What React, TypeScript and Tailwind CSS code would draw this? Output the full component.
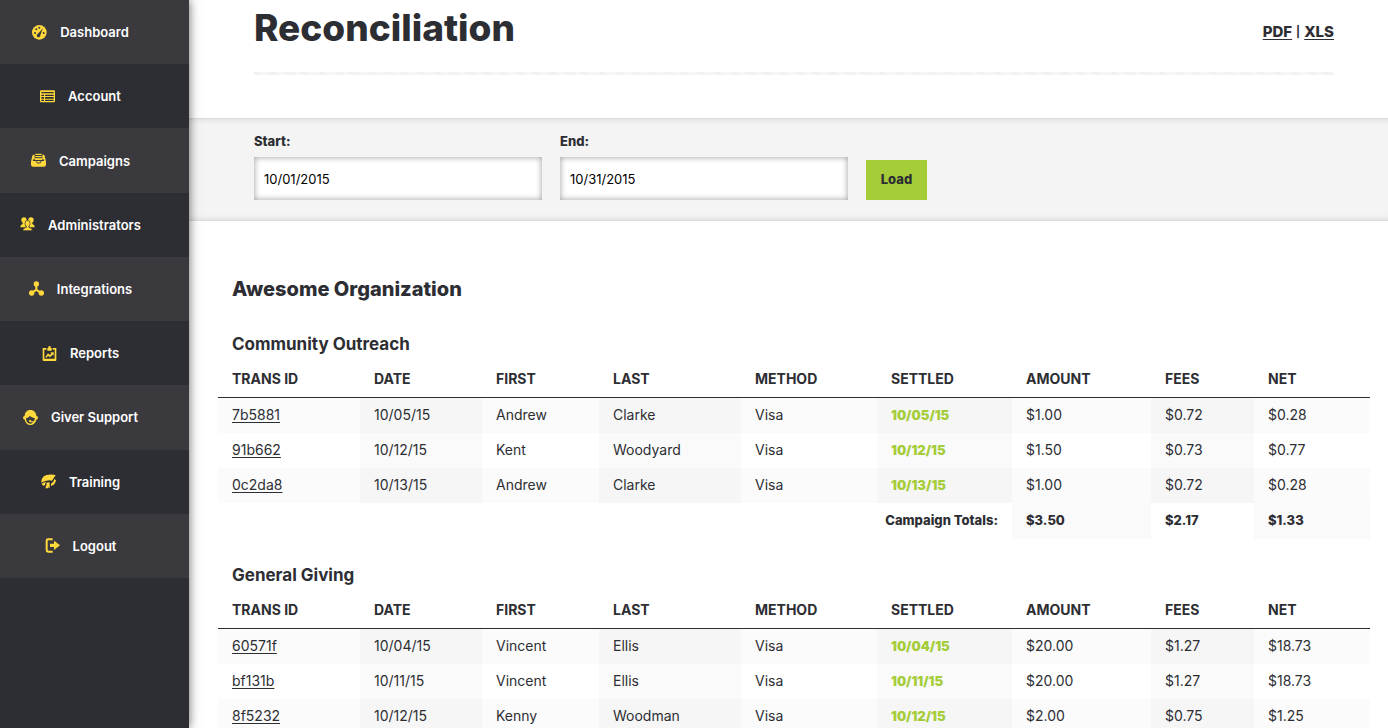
import type { ReactNode } from "react";

type Row = {
  id: string;
  date: string;
  first: string;
  last: string;
  method: string;
  settled: string;
  amount: string;
  fees: string;
  net: string;
};

type Campaign = {
  name: string;
  rows: Row[];
  totals?: { amount: string; fees: string; net: string };
};

// the negative margin cancels the icon's width, so the label alone is centred
const Icon = ({ children }: { children: ReactNode }) => (
  <svg viewBox="0 0 45 45" className="-ml-7 mr-[13px] size-[15px] shrink-0 fill-[#ffd83b] stroke-none" aria-hidden="true">
    {children}
  </svg>
);

const DashboardIcon = () => (
  <Icon>
    <circle cx="22" cy="22" r="22" />
    <g className="fill-[#3a393e]">
      <circle cx="9" cy="24" r="3" />
      <circle cx="35" cy="24" r="3" />
      <circle cx="13" cy="13" r="3" />
      <circle cx="22" cy="8" r="3" />
      <path d="M33 10 25 30a5.5 5.5 0 1 1-7-4Z" />
    </g>
  </Icon>
);

const AccountIcon = () => (
  <Icon>
    <path
      fillRule="evenodd"
      d="M3 4h39q3 0 3 3v30q0 3-3 3H3q-3 0-3-3V7q0-3 3-3ZM4 9v4h37V9ZM4 17v4h8v-4ZM15 17v4h26v-4ZM4 24v5h8v-5ZM15 24v5h26v-5ZM4 32v4h8v-4ZM15 32v4h26v-4Z"
    />
  </Icon>
);

const CampaignsIcon = () => (
  <Icon>
    <path d="M8 5h3v13H8L5 24h9q2 8 9 8t9-8h8l-3-6h-3V5h3q3 0 4 4l4 17v9q0 6-6 6H6q-6 0-6-6v-9L4 9q1-4 4-4Z" />
    <path d="M13 2h19v4H13ZM13 9h19v4H13ZM11 16h23v5H11Z" />
    <path d="M16 24h13q-1 5-6 5t-7-5Z" />
  </Icon>
);

const AdministratorsIcon = () => (
  <Icon>
    <circle cx="12" cy="9" r="8" />
    <circle cx="33" cy="9" r="8" />
    <path d="M1 31q-1-7 7-10V13h9v18ZM44 31q1-7-7-10V13h-9v18Z" />
    <path
      className="stroke-[#2d2e33] stroke-2"
      d="M22.500 10q8 0 8 9 0 5-4 9v3q9 1 11 10H8q2-9 11-10v-3q-4-4-4-9 0-9 7.500-9Z"
    />
  </Icon>
);

const IntegrationsIcon = () => (
  <Icon>
    <circle cx="22" cy="9" r="8" />
    <circle cx="8" cy="36" r="8" />
    <circle cx="37" cy="36" r="8" />
    <path d="M19 12h6v13l14 9-4 5-13-9-13 9-4-5 14-9Z" />
  </Icon>
);

const ReportsIcon = () => (
  <Icon>
    <path d="M2 6h11v5H7v27h31V11h-6V6h11v36q0 3-3 3H5q-3 0-3-3Z" />
    <path d="M19 2q0-2 3.500-2t3.500 2v4h3v8H16V6h3Z" />
    <path d="m10 33 8-11 6 5 4-5-3-3h10v10l-3-3-8 8-6-5-4 6Z" />
  </Icon>
);

const SupportIcon = () => (
  <Icon>
    <path d="M22 0c11 0 17 8 18 17q5 2 5 6t-5 6c-2 9-9 16-18 16S7 38 5 29q-5-2-5-6t5-6C6 8 11 0 22 0Z" />
    <path
      className="fill-[#3a393e]"
      d="M9 25q7-1 12-7 6 6 15 7-1 6-4 9h-8v-4h-4q-2 0-2 3t3 4h9q-3 4-8 4-12 0-13-16Z"
    />
  </Icon>
);

const TrainingIcon = () => (
  <Icon>
    <path d="M17 3q13-3 27 0L33 20q-8-2-16 0-9 1-16 6Q0 8 17 3Z" />
    <path d="M2 29q7-4 13-5-3 4-3 9l-4 2q-5-2-6-6Z" />
    <path d="M17 26q5-3 9 0v17l-4-3-4 4-2-2-3 1 3-9Z" />
    <path d="m41 15 4 4q-3 15-15 17v-7q6-2 11-14Z" />
  </Icon>
);

const LogoutIcon = () => (
  <Icon>
    <path d="M9 1h14v6H11q-3 0-3 3v25q0 3 3 3h12v6H9q-7 0-7-7V8q0-7 7-7Z" />
    <path d="M15 17h12V8l18 14-18 14v-9H15Z" />
  </Icon>
);

const navItems = [
  { label: "Dashboard", icon: <DashboardIcon /> },
  { label: "Account", icon: <AccountIcon /> },
  { label: "Campaigns", icon: <CampaignsIcon /> },
  { label: "Administrators", icon: <AdministratorsIcon /> },
  { label: "Integrations", icon: <IntegrationsIcon /> },
  { label: "Reports", icon: <ReportsIcon /> },
  { label: "Giver Support", icon: <SupportIcon /> },
  { label: "Training", icon: <TrainingIcon /> },
  { label: "Logout", icon: <LogoutIcon /> },
];

const campaigns: Campaign[] = [
  {
    name: "Community Outreach",
    rows: [
      { id: "7b5881", date: "10/05/15", first: "Andrew", last: "Clarke", method: "Visa", settled: "10/05/15", amount: "$1.00", fees: "$0.72", net: "$0.28" },
      { id: "91b662", date: "10/12/15", first: "Kent", last: "Woodyard", method: "Visa", settled: "10/12/15", amount: "$1.50", fees: "$0.73", net: "$0.77" },
      { id: "0c2da8", date: "10/13/15", first: "Andrew", last: "Clarke", method: "Visa", settled: "10/13/15", amount: "$1.00", fees: "$0.72", net: "$0.28" },
    ],
    totals: { amount: "$3.50", fees: "$2.17", net: "$1.33" },
  },
  {
    name: "General Giving",
    rows: [
      { id: "60571f", date: "10/04/15", first: "Vincent", last: "Ellis", method: "Visa", settled: "10/04/15", amount: "$20.00", fees: "$1.27", net: "$18.73" },
      { id: "bf131b", date: "10/11/15", first: "Vincent", last: "Ellis", method: "Visa", settled: "10/11/15", amount: "$20.00", fees: "$1.27", net: "$18.73" },
      { id: "8f5232", date: "10/12/15", first: "Kenny", last: "Woodman", method: "Visa", settled: "10/12/15", amount: "$2.00", fees: "$0.75", net: "$1.25" },
    ],
  },
];

const columns = [
  { title: "TRANS ID", width: "w-[142px]" },
  { title: "DATE", width: "w-[122px]" },
  { title: "FIRST", width: "w-[117px]" },
  { title: "LAST", width: "w-[142px]" },
  { title: "METHOD", width: "w-[136px]" },
  { title: "SETTLED", width: "w-[135px]" },
  { title: "AMOUNT", width: "w-[139px]" },
  { title: "FEES", width: "w-[103px]" },
  { title: "NET", width: "w-[116px]" },
];

const Sidebar = () => (
  <nav className="relative z-10 w-[189px] shrink-0 bg-[#2d2e33] shadow-[0_0_10px_rgba(0,0,0,0.6)]">
    <ul className="grid h-[578px] grid-rows-9">
      {navItems.map((item) => (
        <li key={item.label} className="odd:bg-[#3a393e]">
          <a href="#" className="flex h-full items-center justify-center text-[13px] leading-5 font-semibold text-white">
            {item.icon}
            {item.label}
          </a>
        </li>
      ))}
    </ul>
  </nav>
);

const DateField = ({ id, label, value }: { id: string; label: string; value: string }) => (
  <div className="flex w-72 flex-col">
    <label htmlFor={id} className="mb-1.5 text-[13px] leading-5 font-extrabold">
      {label}
    </label>
    <input
      id={id}
      type="text"
      defaultValue={value}
      className="h-[43px] bg-white px-2.5 text-[13px] text-black shadow-[inset_0_0_6px_rgba(0,0,0,0.4)] outline-none"
    />
  </div>
);

const CampaignTable = ({ campaign }: { campaign: Campaign }) => (
  <section className="mb-6">
    <h3 className="px-3.5 text-[17px] leading-6 font-bold">{campaign.name}</h3>
    <table className="w-full table-fixed border-separate border-spacing-0 text-left text-sm leading-5">
      <thead>
        <tr>
          {columns.map((col) => (
            <th
              key={col.title}
              className={`h-[42px] border-b border-[#2d2e33] px-3.5 pb-2 align-bottom font-bold ${col.width}`}
            >
              {col.title}
            </th>
          ))}
        </tr>
      </thead>
      <tbody>
        {campaign.rows.map((row) => (
          <tr key={row.id} className="h-[35px] odd:bg-black/[0.015] *:px-3.5 *:pb-0.5 *:even:bg-black/[0.018]">
            <td>
              <a href="#" className="underline underline-offset-2">
                {row.id}
              </a>
            </td>
            <td>{row.date}</td>
            <td>{row.first}</td>
            <td>{row.last}</td>
            <td>{row.method}</td>
            <td className="text-[13px] font-black text-[#a5cd39]">{row.settled}</td>
            <td>{row.amount}</td>
            <td>{row.fees}</td>
            <td>{row.net}</td>
          </tr>
        ))}
      </tbody>
      {campaign.totals && (
        <tfoot>
          <tr className="h-9 text-[13px] font-extrabold *:px-3.5 *:pb-0.5 *:even:bg-black/[0.018]">
            <td colSpan={6} className="text-right">
              Campaign Totals:
            </td>
            <td>{campaign.totals.amount}</td>
            <td>{campaign.totals.fees}</td>
            <td>{campaign.totals.net}</td>
          </tr>
        </tfoot>
      )}
    </table>
  </section>
);

const App = () => {
  return (
    <div className="flex h-screen overflow-hidden bg-white font-['Inter',sans-serif] text-[#2d2e33]">
      <Sidebar />

      <main className="min-w-0 flex-1">
        <header className="mr-[54px] ml-[65px] flex h-[118px] flex-col">
          <div className="flex h-[72px] items-start justify-between pt-1">
            <h1 className="text-[37px] leading-[48px] font-extrabold">Reconciliation</h1>
            <p className="flex items-center gap-1 pt-4 text-[15px] leading-6 font-extrabold">
              <a href="#" className="underline underline-offset-2">PDF</a>
              <span className="text-[11px] font-bold">|</span>
              <a href="#" className="underline underline-offset-2">XLS</a>
            </p>
          </div>
          <div className="h-[3px] bg-[repeating-linear-gradient(45deg,#eeeeee_0_1px,#fafafa_1px_2px)]" />
        </header>

        <form
          className="flex h-[103px] items-end gap-[18px] border-y border-[#dcdcdc] bg-[#f4f4f4] pb-5 pl-[65px] shadow-[inset_0_6px_6px_-6px_rgba(0,0,0,0.12),inset_0_-6px_6px_-6px_rgba(0,0,0,0.12)]"
          onSubmit={(e) => e.preventDefault()}
        >
          <DateField id="start" label="Start:" value="10/01/2015" />
          <DateField id="end" label="End:" value="10/31/2015" />
          <button type="submit" className="h-10 w-[61px] bg-[#a5cd39] text-[13px] font-extrabold">
            Load
          </button>
        </form>

        <div className="pt-[54px] pr-[18px] pl-[29px]">
          <h2 className="mb-[29px] px-3.5 text-xl leading-7 font-extrabold">Awesome Organization</h2>
          {campaigns.map((campaign) => (
            <CampaignTable key={campaign.name} campaign={campaign} />
          ))}
        </div>
      </main>
    </div>
  );
};

export default App;
